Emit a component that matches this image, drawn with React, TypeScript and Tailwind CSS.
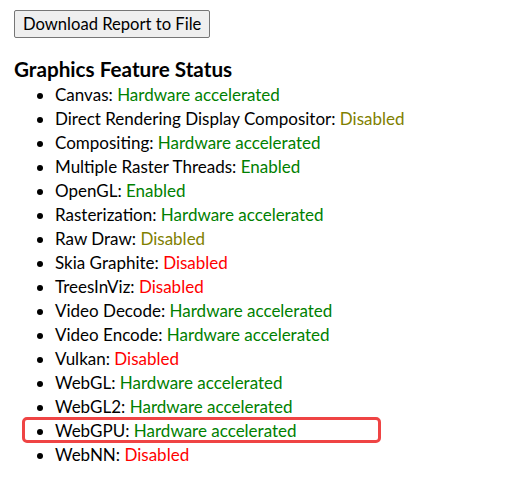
const features: { name: string; status: string; tone: 'ok' | 'warn' | 'off' }[] = [
  { name: 'Canvas', status: 'Hardware accelerated', tone: 'ok' },
  { name: 'Direct Rendering Display Compositor', status: 'Disabled', tone: 'warn' },
  { name: 'Compositing', status: 'Hardware accelerated', tone: 'ok' },
  { name: 'Multiple Raster Threads', status: 'Enabled', tone: 'ok' },
  { name: 'OpenGL', status: 'Enabled', tone: 'ok' },
  { name: 'Rasterization', status: 'Hardware accelerated', tone: 'ok' },
  { name: 'Raw Draw', status: 'Disabled', tone: 'warn' },
  { name: 'Skia Graphite', status: 'Disabled', tone: 'off' },
  { name: 'TreesInViz', status: 'Disabled', tone: 'off' },
  { name: 'Video Decode', status: 'Hardware accelerated', tone: 'ok' },
  { name: 'Video Encode', status: 'Hardware accelerated', tone: 'ok' },
  { name: 'Vulkan', status: 'Disabled', tone: 'off' },
  { name: 'WebGL', status: 'Hardware accelerated', tone: 'ok' },
  { name: 'WebGL2', status: 'Hardware accelerated', tone: 'ok' },
  { name: 'WebGPU', status: 'Hardware accelerated', tone: 'ok' },
  { name: 'WebNN', status: 'Disabled', tone: 'off' },
]

const toneClass = {
  ok: 'text-[#008000]',
  warn: 'text-[#808000]',
  off: 'text-[#ff0000]',
}

export default function App() {
  return (
    <div className="min-h-[477px] bg-white px-[14px] pt-[10px] text-black font-['Lato',sans-serif]">
      <button className="h-[28px] px-[8px] text-[16.6px] bg-[#efefef] border border-[#767676] rounded-[2px]">
        Download Report to File
      </button>

      <h3 className="mt-[19px] mb-[2px] text-[20.7px] font-bold leading-[24px]">Graphics Feature Status</h3>

      <ul className="list-disc pl-[41px] text-[17px] leading-[24px]">
        {features.map((f) => (
          <li key={f.name} className="relative">
            {f.name}: <span className={toneClass[f.tone]}>{f.status}</span>
            {f.name === 'WebGPU' && (
              <span className="absolute left-[-33px] top-[-2px] w-[359px] h-[26px] border-[3px] border-[#ef4444] rounded-[5px] pointer-events-none" />
            )}
          </li>
        ))}
      </ul>
    </div>
  )
}
